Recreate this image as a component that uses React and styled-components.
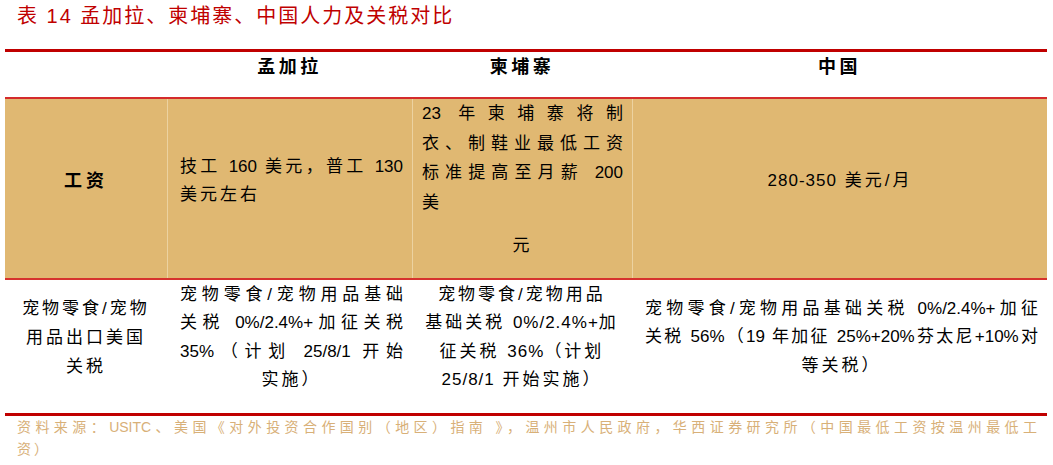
import styled, { createGlobalStyle } from "styled-components";

const GlobalStyle = createGlobalStyle`
  html, body {
    margin: 0;
    padding: 0;
    background: #ffffff;
  }
  body {
    font-family: "Liberation Sans Narrow", "Liberation Sans", "Noto Sans CJK SC", sans-serif;
    color: #000000;
  }
`;

const Page = styled.div`
  width: 1053px;
  height: 465px;
  overflow: hidden;
`;

const Title = styled.div`
  height: 49px;
  line-height: 33px;
  padding-left: 17px;
  font-family: "Liberation Sans", "Noto Sans CJK SC", sans-serif;
  font-size: 20px;
  letter-spacing: 2px;
  color: #c00000;
`;

const Table = styled.div`
  margin: 0 6px 0 5px;
`;

const Row = styled.div`
  display: grid;
  grid-template-columns: 162px 245px 220px 1fr;
  height: ${(p) => p.$height}px;
  background: ${(p) => p.$bg || "transparent"};
  border-top: ${(p) => (p.$top ? "3px solid #c00000" : "none")};
  border-bottom: ${(p) => p.$bottom};
`;

const HeadCell = styled.div`
  padding-top: 3px;
  text-align: center;
  font-size: 18px;
  line-height: 24px;
  font-weight: 700;
  letter-spacing: 3.5px;
`;

const Cell = styled.div`
  display: flex;
  flex-direction: column;
  justify-content: ${(p) => (p.$top ? "flex-start" : "center")};
  padding: ${(p) => p.$pad};
  border-left: ${(p) => (p.$divider ? "1px solid #ecd2a0" : "none")};
  font-size: 17px;
  line-height: ${(p) => p.$lh || 28.5}px;
`;

const Label = styled.div`
  text-align: center;
  font-size: 18px;
  font-weight: 700;
  letter-spacing: 4px;
`;

const Line = styled.div`
  white-space: nowrap;
  text-align: ${(p) => p.$align || "justify"};
  text-align-last: ${(p) => p.$align || "justify"};
  letter-spacing: ${(p) => (p.$align ? "3px" : "0")};
  margin-top: ${(p) => p.$gap || 0}px;
`;

/* latin runs keep a tighter spacing, as in the source document */
const Num = styled.span`
  letter-spacing: 1px;
`;

const Source = styled.div`
  padding: 0 16px 0 17px;
  font-family: "Liberation Sans Narrow", "Liberation Sans", "Noto Sans CJK SC", sans-serif;
  font-size: 14px;
  line-height: 22px;
  color: #d8b078;
`;

export default function App() {
  return (
    <Page>
      <GlobalStyle />
      <Title>表 14 孟加拉、柬埔寨、中国人力及关税对比</Title>
      <Table>
        <Row $height={45} $top $bottom="2px solid #d42b2b">
          <HeadCell />
          <HeadCell>孟加拉</HeadCell>
          <HeadCell>柬埔寨</HeadCell>
          <HeadCell>中国</HeadCell>
        </Row>

        <Row $height={179} $bg="#e0b872" $bottom="2px solid #d6322e">
          <Cell $pad="0 0 15px 0">
            <Label>工资</Label>
          </Cell>
          <Cell $divider $pad="0 9px 15px 12px">
            <Line>技工 160 美元，普工 130</Line>
            <Line $align="left">美元左右</Line>
          </Cell>
          <Cell $divider $top $lh={29.5} $pad="0 9px 0 9px">
            <Line>23 年柬埔寨将制</Line>
            <Line>衣、制鞋业最低工资</Line>
            <Line>标准提高至月薪 200</Line>
            <Line $align="left">美</Line>
            <Line $align="center" $gap={14}>元</Line>
          </Cell>
          <Cell $divider $pad="0 0 15px 0">
            <Line $align="center"><Num>280-350</Num> 美元/月</Line>
          </Cell>
        </Row>

        <Row $height={133} $bottom="3px solid #c00000">
          <Cell $pad="0 0 18px 0" $lh={29}>
            <Line $align="center">宠物零食/宠物</Line>
            <Line $align="center">用品出口美国</Line>
            <Line $align="center">关税</Line>
          </Cell>
          <Cell $pad="0 9px 18px 13px">
            <Line>宠物零食/宠物用品基础</Line>
            <Line>关税 0%/2.4%+加征关税</Line>
            <Line>35%（计划 25/8/1 开始</Line>
            <Line $align="center">实施）</Line>
          </Cell>
          <Cell $pad="0 6px 18px 6px">
            <Line $align="center">宠物零食/宠物用品</Line>
            <Line $align="center">基础关税 <Num>0%/2.4%+</Num>加</Line>
            <Line $align="center">征关税 <Num>36%</Num>（计划</Line>
            <Line $align="center"><Num>25/8/1</Num> 开始实施）</Line>
          </Cell>
          <Cell $pad="0 9px 18px 13px">
            <Line>宠物零食/宠物用品基础关税 0%/2.4%+加征</Line>
            <Line>关税 56%（19 年加征 25%+20%芬太尼+10%对</Line>
            <Line $align="center">等关税）</Line>
          </Cell>
        </Row>
      </Table>
      <Source>
        <Line>资料来源：USITC、美国《对外投资合作国别（地区）指南 》，温州市人民政府，华西证券研究所（中国最低工资按温州最低工</Line>
        <Line $align="left">资）</Line>
      </Source>
    </Page>
  );
}
